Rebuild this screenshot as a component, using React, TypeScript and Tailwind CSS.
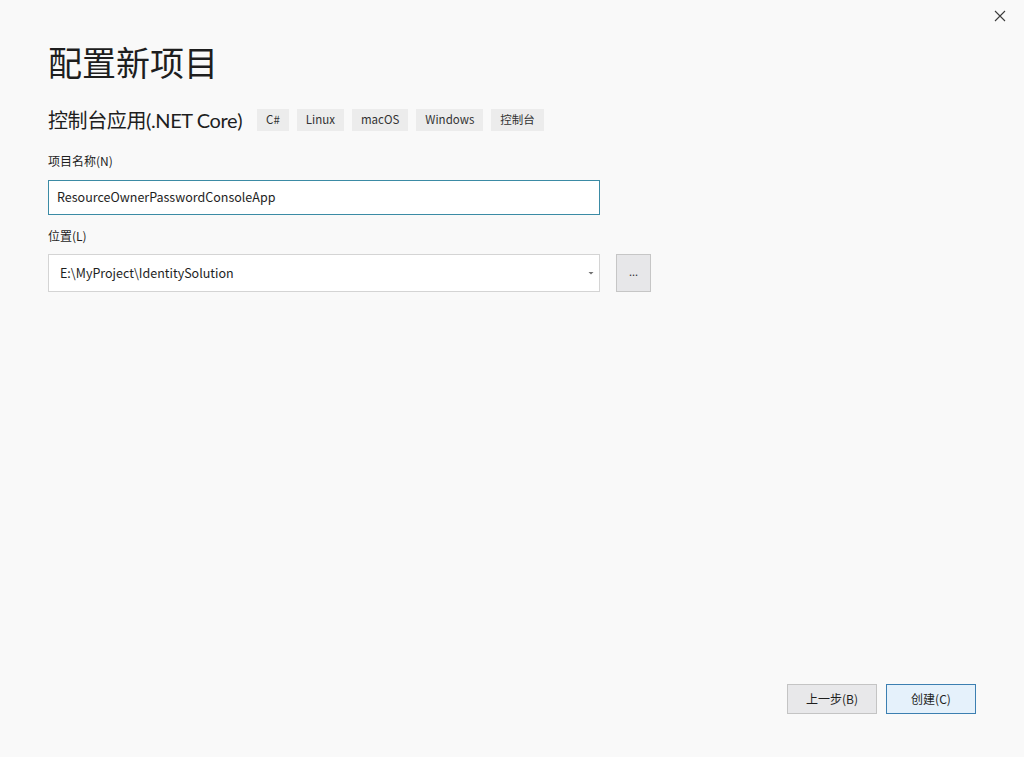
const FONT = { fontFamily: '"Noto Sans CJK SC", "Noto Sans", sans-serif' };
const SUB_FONT = { fontFamily: 'Lato, "Noto Sans CJK SC", sans-serif' };

const tags = ["C#", "Linux", "macOS", "Windows", "控制台"];

export default function App() {
  return (
    <div
      className="relative h-[757px] w-[1024px] overflow-hidden bg-[#f9f9f9] text-[#1e1e1e]"
      style={FONT}
    >
      {/* close */}
      <button className="absolute right-[17px] top-[9px] flex h-[14px] w-[14px] items-center justify-center">
        <svg width="12" height="12" viewBox="0 0 12 12">
          <path d="M1 1L11 11M11 1L1 11" stroke="#3c3c3c" strokeWidth="1.1" />
        </svg>
      </button>

      <div className="flex h-full flex-col px-[48px] pb-[43px] pt-[38px]">
        <h1 className="text-[34px] leading-[48px] text-[#1e1e1e]">配置新项目</h1>

        <div className="mt-[20px] flex items-center">
          <span className="text-[20px] leading-[28px] tracking-[-0.4px]" style={SUB_FONT}>
            控制台应用(.NET Core)
          </span>
          <div className="ml-[15px] flex gap-[8px]">
            {tags.map((t) => (
              <span
                key={t}
                className="flex h-[22px] items-center bg-[#ececec] px-[9px] text-[11.5px] text-[#333]"
              >
                {t}
              </span>
            ))}
          </div>
        </div>

        <label className="mt-[18px] text-[12px] leading-[17px] text-[#1e1e1e]">项目名称(N)</label>
        <div className="mt-[11px] flex h-[35px] w-[552px] items-center border border-[#3b8ba5] bg-white px-[8px] text-[12.5px]">
          ResourceOwnerPasswordConsoleApp
        </div>

        <label className="mt-[12px] text-[12px] leading-[17px]">位置(L)</label>
        <div className="mt-[10px] flex items-center gap-[16px]">
          <div className="flex h-[38px] w-[552px] items-center justify-between border border-[#d4d4d4] bg-white pl-[11px] pr-[4px] text-[12.5px]">
            <span>E:\MyProject\IdentitySolution</span>
            <svg width="8" height="6" viewBox="0 0 8 6">
              <path d="M1.5 2L4 4.5L6.5 2Z" fill="#707070" />
            </svg>
          </div>
          <button className="flex h-[38px] w-[35px] items-center justify-center border border-[#c6c6c6] bg-[#e7e7e9] pb-[4px] text-[11px] text-[#333]">
            ...
          </button>
        </div>

        <div className="mt-auto flex justify-end gap-[9px]">
          <button className="h-[30px] w-[90px] border border-[#c4c4c4] bg-[#e8e8ea] text-[12px] text-[#1e1e1e]">
            上一步(B)
          </button>
          <button className="h-[30px] w-[90px] border border-[#3c7fb1] bg-[#e5f1fb] text-[12px] text-[#1e1e1e]">
            创建(C)
          </button>
        </div>
      </div>
    </div>
  );
}
